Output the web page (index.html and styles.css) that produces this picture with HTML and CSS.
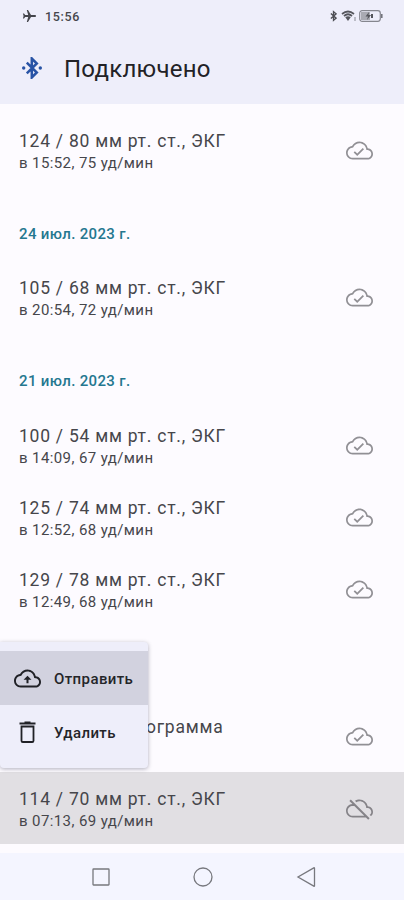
FILE: index.html
```html
<!DOCTYPE html>
<html lang="ru">
<head>
<meta charset="utf-8">
<title>Подключено</title>
<link rel="stylesheet" href="styles.css">
</head>
<body>
<svg class="defs" aria-hidden="true">
  <symbol id="done" viewBox="0 0 24 24"><path d="M19.35 10.04C18.67 6.59 15.64 4 12 4 9.11 4 6.6 5.64 5.35 8.04 2.34 8.36 0 10.91 0 14c0 3.31 2.69 6 6 6h13c2.76 0 5-2.24 5-5 0-2.64-2.05-4.78-4.65-4.96zM19 18.500H6c-2.48 0-4.500-2.020-4.500-4.500 0-2.300 1.700-4.220 3.950-4.470l.9-.1.380-.75C7.800 6.700 9.780 5.500 12 5.500c2.850 0 5.330 2.030 5.880 4.830l.23 1.130 1.140.08c1.830.12 3.250 1.640 3.250 3.460C22.500 16.930 20.930 18.500 19 18.500z"/><path d="M10 14.700l-2.100-2.100-1.100 1.100L10 16.900l6-6-1.100-1.100z"/></symbol>
  <symbol id="off" viewBox="0 0 24 24"><path d="M19.35 10.040C18.670 6.590 15.640 4 12 4c-1.480 0-2.850.430-4.010 1.170l1.200 1.200C10.020 5.900 10.980 5.600 12 5.600c2.900 0 5.200 2 5.800 4.700l.2 1.200h1.200c1.800.1 3.300 1.600 3.300 3.500 0 1.130-.640 2.110-1.560 2.620l1.150 1.150C23.260 17.860 24 16.520 24 15c0-2.640-2.050-4.780-4.650-4.960zM3 5.270l2.750 2.740C2.560 8.150 0 10.770 0 14c0 3.310 2.690 6 6 6h11.730l2 2L21 20.730 4.270 4 3 5.270zM7.400 9.670l8.830 8.830H6c-2.480 0-4.500-2.020-4.500-4.500s2.020-4.330 4.500-4.330h1.400z"/></symbol>
  <symbol id="upload" viewBox="0 0 24 24"><path d="M19.350 10.040C18.670 6.590 15.640 4 12 4 9.110 4 6.600 5.640 5.350 8.040 2.340 8.360 0 10.910 0 14c0 3.310 2.690 6 6 6h13c2.760 0 5-2.240 5-5 0-2.640-2.050-4.780-4.650-4.960zM19 18.300H6c-2.400 0-4.300-1.900-4.300-4.300 0-2.200 1.600-4 3.800-4.300l1-.1.400-.8C7.900 6.900 9.800 5.700 12 5.700c2.800 0 5.200 2 5.700 4.700l.25 1.200 1.250.1c1.700.1 3.100 1.500 3.100 3.300 0 1.800-1.500 3.300-3.300 3.300zM8.500 13h2.600v3.300h1.800V13h2.600L12 9.500z"/></symbol>
</svg>
<header class="top">
  <div class="status">
    <svg class="plane" viewBox="0 0 14 14"><path d="M14 7c0-.7-.5-1-1.100-1H9L6 1H4.800l1.400 5H3.200L2 4.600H.9L1.600 7 .9 9.400H2L3.200 8h3L4.800 13H6l3-5h3.900c.6 0 1.100-.3 1.100-1z"/></svg>
    <span class="clock">15:56</span>
    <svg class="bt-small" viewBox="0 0 8 12"><path d="M1 3.200l6 5.300-3 2.500V1l3 2.500-6 5.300"/></svg>
    <svg class="wifi" viewBox="0 0 16 12"><path d="M1 4q6-5 12 0M3 6q4-3.500 8 0" fill="none" stroke="#55565c" stroke-width="1.700"/><path d="M4.300 7.200q2.700-2 5.400 0L7 11z"/><path d="M14 7v4" stroke="#888a92"/></svg>
    <svg class="battery" viewBox="0 0 24 12"><rect x=".7" y=".7" width="20.600" height="10.600" rx="2.500" fill="none" stroke="#85868e" stroke-width="1.200"/><rect x="2" y="2" width="9" height="8" fill="#a9aab2"/><path d="M22.800 4v4" stroke="#6d6e76" stroke-width="1.500"/><path d="M10 2L6.500 6.500H9L8 10l4-5H9.500zM12 4h2v4h-2z" fill="#55565c"/></svg>
  </div>
  <div class="bar">
    <svg class="bt" viewBox="0 0 20 22"><path d="M4.800 5.600l10 9.900-5 5V1.500l5 5-10 9.900" fill="none" stroke="#2853a5" stroke-width="2.500"/><circle cx="1.700" cy="11" r="1.700" fill="#2853a5"/><circle cx="18.300" cy="11" r="1.700" fill="#2853a5"/></svg>
    <h1>Подключено</h1>
  </div>
</header>
<main>
  <div class="row"><div><p class="main">124 / 80 мм рт. ст., ЭКГ</p><p class="sub">в 15:52, 75 уд/мин</p></div><svg class="cloud"><use href="#done"/></svg></div>
  <h2>24 июл. 2023 г.</h2>
  <div class="row"><div><p class="main">105 / 68 мм рт. ст., ЭКГ</p><p class="sub">в 20:54, 72 уд/мин</p></div><svg class="cloud"><use href="#done"/></svg></div>
  <h2>21 июл. 2023 г.</h2>
  <div class="row"><div><p class="main">100 / 54 мм рт. ст., ЭКГ</p><p class="sub">в 14:09, 67 уд/мин</p></div><svg class="cloud"><use href="#done"/></svg></div>
  <div class="row"><div><p class="main">125 / 74 мм рт. ст., ЭКГ</p><p class="sub">в 12:52, 68 уд/мин</p></div><svg class="cloud"><use href="#done"/></svg></div>
  <div class="row"><div><p class="main">129 / 78 мм рт. ст., ЭКГ</p><p class="sub">в 12:49, 68 уд/мин</p></div><svg class="cloud"><use href="#done"/></svg></div>
  <h2></h2>
  <div class="row"><div><p class="main ecg">ограмма</p><p class="sub"></p></div><svg class="cloud"><use href="#done"/></svg></div>
  <div class="row selected"><div><p class="main">114 / 70 мм рт. ст., ЭКГ</p><p class="sub">в 07:13, 69 уд/мин</p></div><svg class="cloud"><use href="#off"/></svg></div>
</main>
<div class="menu">
  <div class="item active"><svg class="mi"><use href="#upload"/></svg><span>Отправить</span></div>
  <div class="item"><svg class="mi" viewBox="0 0 27 27"><path d="M7.500 7.500h12v14.200q0 1.300-1.300 1.300H8.800q-1.300 0-1.300-1.300zM5.500 4.500h16M10.500 3.500h6" fill="none" stroke="#202126" stroke-width="1.800"/></svg><span>Удалить</span></div>
</div>
<nav>
  <svg viewBox="0 0 20 20"><rect x="2" y="2" width="16" height="16" rx=".5"/></svg>
  <svg viewBox="0 0 20 20"><circle cx="10" cy="10" r="9"/></svg>
  <svg viewBox="0 0 20 20"><path d="M19.500 1.300v17.400q0 .8-.7.400L3 10 18.800.9q.7-.4.700.4z"/></svg>
</nav>
</body>
</html>
```
FILE: styles.css
```css
* { box-sizing: border-box; }
body {
  margin: 0;
  width: 404px;
  height: 900px;
  overflow: hidden;
  position: relative;
  display: flex;
  flex-direction: column;
  background: #fdfbff;
  font-family: Roboto, sans-serif;
  color: #46464b;
}
h1, h2, p { margin: 0; font-weight: 400; }
svg { flex: none; display: block; }
.defs { position: absolute; width: 0; height: 0; }
.top { height: 104px; background: #eeeefa; }
.status { display: flex; align-items: center; height: 32px; padding: 0 21px 0 22px; }
.plane { width: 14px; height: 14px; fill: #44454b; }
.clock { margin-left: 9px; font-size: 12.5px; font-weight: 500; letter-spacing: .65px; color: #45464c; }
.bt-small { width: 7px; height: 12px; margin-left: auto; fill: none; stroke: #4c4d53; stroke-width: 1.5; }
.wifi { width: 16px; height: 12px; margin-left: 4px; fill: #55565c; }
.battery { width: 24px; height: 12px; margin-left: 2px; }
.bar { display: flex; align-items: center; height: 74px; padding-left: 22px; }
.bt { width: 20px; height: 22px; margin-top: -2px; }
h1 { margin-left: 22px; font-size: 24px; line-height: 32px; letter-spacing: .25px; color: #222226; }
main { padding-top: 10px; height: 749px; }
.row { display: flex; justify-content: space-between; height: 72px; padding: 15px 31px 0 19px; }
.main { font-size: 17.5px; line-height: 24px; letter-spacing: .75px; white-space: nowrap; }
.sub { font-size: 15px; line-height: 21px; letter-spacing: .4px; white-space: nowrap; }
.cloud { width: 27px; height: 27px; margin-top: 8px; fill: #919095; }
.ecg { padding-left: 127px; }
h2 { height: 75.3px; padding: 38px 19px 0; font-size: 15px; line-height: 20px; font-weight: 500; letter-spacing: .35px; color: #24778f; }
.selected { background: #e1dfe3; }
.selected .cloud { fill: #858388; }
.menu {
  position: absolute;
  left: 0;
  top: 642px;
  width: 148px;
  height: 126px;
  padding-top: 9px;
  background: #eeeefa;
  border-radius: 0 4px 4px 4px;
  box-shadow: 0 1px 4px rgba(60, 60, 85, .4);
}
.item { display: flex; align-items: center; height: 54px; padding-left: 14px; gap: 13px; font-size: 15px; font-weight: 500; letter-spacing: .4px; color: #242529; }
.item span { padding-top: 1px; }
.active { background: #d2d2df; }
.mi { width: 27px; height: 27px; fill: #202126; }
nav { height: 47px; background: #f4f5ff; display: flex; justify-content: center; align-items: center; gap: 82px; padding-left: 2px; }
nav svg { width: 20px; height: 20px; fill: none; stroke: #77787e; stroke-width: 1.3; overflow: visible; }
```
